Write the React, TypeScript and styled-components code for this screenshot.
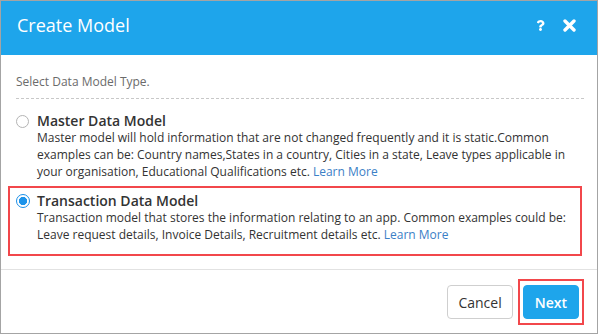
import React from 'react';
import styled, { createGlobalStyle } from 'styled-components';
import { FaQuestion } from 'react-icons/fa';

const GlobalStyle = createGlobalStyle`
  body {
    margin: 0;
    background: #fff;
    font-family: 'Open Sans', 'Liberation Sans', sans-serif;
  }
`;

type ModelOption = {
  id: string;
  title: string;
  text: string;
  checked?: boolean;
};

const options: ModelOption[] = [
  {
    id: 'master',
    title: 'Master Data Model',
    text:
      'Master model will hold information that are not changed frequently and it is static.Common examples can be: Country names,States in a country, Cities in a state, Leave types applicable in your organisation, Educational Qualifications etc.',
  },
  {
    id: 'transaction',
    title: 'Transaction Data Model',
    text:
      'Transaction model that stores the information relating to an app. Common examples could be: Leave request details, Invoice Details, Recruitment details etc.',
    checked: true,
  },
];

const CloseIcon = () => (
  <svg width="13" height="13" viewBox="0 0 13 13">
    <path d="M2 2 L11 11 M11 2 L2 11" stroke="#fff" strokeWidth="3.4" strokeLinecap="round" />
  </svg>
);

const App: React.FC = () => {
  return (
    <>
      <GlobalStyle />
      <StyledDialog>
        <StyledHeader>
          <StyledTitle>Create Model</StyledTitle>
          <StyledHeaderIcon aria-label="Help">
            <FaQuestion size={11} />
          </StyledHeaderIcon>
          <StyledHeaderIcon aria-label="Close">
            <CloseIcon />
          </StyledHeaderIcon>
        </StyledHeader>

        <StyledBody>
          <StyledIntro>Select Data Model Type.</StyledIntro>
          <StyledOptions>
            {options.map((o) => (
              <StyledOption key={o.id} $highlighted={o.checked}>
                <StyledRadio $checked={o.checked} />
                <StyledOptionTitle>{o.title}</StyledOptionTitle>
                <StyledOptionText>
                  {o.text} <StyledLink href="#">Learn More</StyledLink>
                </StyledOptionText>
              </StyledOption>
            ))}
          </StyledOptions>
        </StyledBody>

        <StyledFooter>
          <StyledButton>Cancel</StyledButton>
          <StyledHighlight>
            <StyledButton $primary>Next</StyledButton>
          </StyledHighlight>
        </StyledFooter>
      </StyledDialog>
    </>
  );
};

const StyledDialog = styled.div`
  width: 598px;
  box-sizing: border-box;
  border: 1px solid #a4a4a4;
  background: #fff;
  display: flex;
  flex-direction: column;
`;

const StyledHeader = styled.header`
  height: 54px;
  box-sizing: border-box;
  background: #1ea5eb;
  color: #fff;
  display: flex;
  align-items: center;
  padding: 0 21px 6px 16px;
  gap: 17px;
`;

const StyledTitle = styled.h1`
  flex: 1;
  margin: 0;
  font-size: 18px;
  font-weight: 400;
  line-height: 26px;
`;

const StyledHeaderIcon = styled.span`
  display: flex;
  align-items: center;
  color: #fff;
`;

const StyledBody = styled.div`
  padding: 18px 13px 0 15px;
`;

const StyledIntro = styled.p`
  margin: 0;
  padding-bottom: 7px;
  font-size: 12px;
  line-height: 18px;
  color: #6b6b6b;
  border-bottom: 1px dashed #c8c8c8;
`;

const StyledOptions = styled.div`
  display: flex;
  flex-direction: column;
  gap: 6px;
  margin-top: 13px;
`;

const StyledOption = styled.label<{ $highlighted?: boolean }>`
  display: grid;
  grid-template-columns: 21px 1fr;
  color: #333;
  ${({ $highlighted }) =>
    $highlighted
      ? `
    border: 2px solid #f2474b;
    margin: 0 2px 0 -8px;
    padding: 4px 4px 11px 6px;
  `
      : ''}
`;

const StyledRadio = styled.span<{ $checked?: boolean }>`
  grid-row: 1;
  grid-column: 1;
  width: ${({ $checked }) => ($checked ? '14px' : '13px')};
  height: ${({ $checked }) => ($checked ? '14px' : '13px')};
  margin-top: ${({ $checked }) => ($checked ? '2px' : '3px')};
  box-sizing: border-box;
  border-radius: 50%;
  border: ${({ $checked }) => ($checked ? '1.5px solid #1b8fe8' : '1px solid #b4b4b4')};
  background: ${({ $checked }) =>
    $checked ? 'radial-gradient(circle, #1b93ea 0 3.8px, #fff 4.4px)' : '#fff'};
`;

const StyledOptionTitle = styled.div`
  grid-row: 1;
  grid-column: 2;
  font-size: 14px;
  font-weight: 600;
  line-height: 17px;
`;

const StyledOptionText = styled.div`
  grid-row: 2;
  grid-column: 2;
  font-size: 12px;
  line-height: 17px;
`;

const StyledLink = styled.a`
  color: #3b80c6;
  text-decoration: none;
`;

const StyledFooter = styled.footer`
  margin-top: 13px;
  border-top: 1px solid #e2e2e2;
  padding: 9px 13px 8px;
  display: flex;
  justify-content: flex-end;
  align-items: center;
  gap: 5px;
`;

const StyledHighlight = styled.div`
  border: 2px solid #f2474b;
  padding: 4px 3px;
  display: flex;
`;

const StyledButton = styled.button<{ $primary?: boolean }>`
  height: 34px;
  padding: 0 ${({ $primary }) => ($primary ? '11px' : '10px')};
  border-radius: 4px;
  font-family: 'Open Sans', 'Liberation Sans', sans-serif;
  font-size: 14px;
  cursor: pointer;
  border: 1px solid ${({ $primary }) => ($primary ? '#1ea5eb' : '#cfcfcf')};
  background: ${({ $primary }) => ($primary ? '#1ea5eb' : '#fff')};
  color: ${({ $primary }) => ($primary ? '#fff' : '#333')};
  font-weight: ${({ $primary }) => ($primary ? 600 : 400)};
`;

export default App;
